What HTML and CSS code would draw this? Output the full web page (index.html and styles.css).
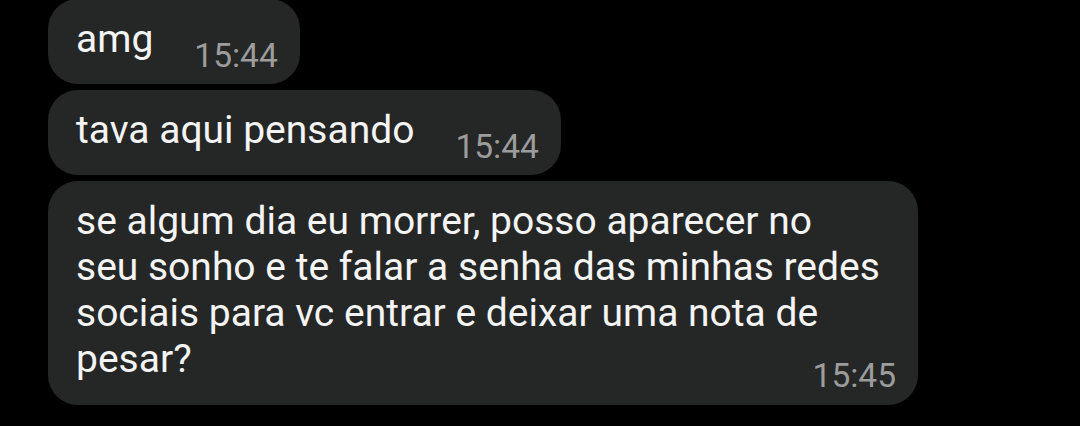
FILE: index.html
```html
<!DOCTYPE html>
<html lang="pt-BR">
<head>
  <meta charset="UTF-8" />
  <meta name="viewport" content="width=device-width, initial-scale=1.0"/>
  <title>Conversa</title>
  <link rel="stylesheet" href="styles.css">
</head>
<body>
  <div class="chat">
    <div class="bubble">
      <span class="msg-text">amg</span>
      <span class="msg-time">15:44</span>
    </div>
    <div class="bubble">
      <span class="msg-text">tava aqui pensando</span>
      <span class="msg-time">15:44</span>
    </div>
    <!-- quebras de linha iguais às da captura -->
    <div class="bubble long">
      <span class="msg-text">se algum dia eu morrer, posso aparecer no<br>seu sonho e te falar a senha das minhas redes<br>sociais para vc entrar e deixar uma nota de<br>pesar?</span>
      <span class="msg-time">15:45</span>
    </div>
  </div>
</body>
</html>
```

FILE: styles.css
```css
* { box-sizing: border-box; }
html, body { height: 100%; }
body { margin: 0; background-color: #000; font-family: Roboto, "Noto Sans", sans-serif; overflow: hidden; }
.chat { display: flex; flex-direction: column; align-items: flex-start; gap: 6px; padding: 0 0 0 48px; margin-top: -1px; }
.bubble { display: flex; align-items: flex-end; max-width: 870px; padding: 17px 22px 12px 28px; background-color: #252626; border-radius: 30px; }
.msg-text { color: #f4f4f4; font-size: 39px; line-height: normal; margin-bottom: 10px; white-space: nowrap; }
.msg-time { color: #9c9c9c; font-size: 33.5px; line-height: 1; margin-left: 41px; white-space: nowrap; }
.bubble.long { width: 870px; flex-direction: column; align-items: flex-start; }
.bubble.long .msg-text { margin-bottom: 0; }
.bubble.long .msg-time { align-self: flex-end; margin-top: -23px; margin-left: 0; }
```
